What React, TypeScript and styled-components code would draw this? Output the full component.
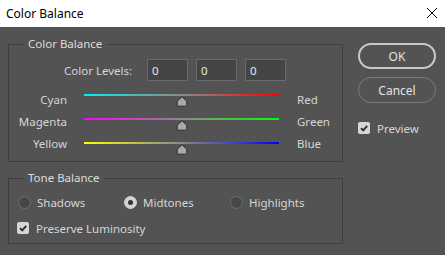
import React from "react";
import styled, { createGlobalStyle } from "styled-components";

const Global = createGlobalStyle`
  html, body { margin: 0; padding: 0; background: #535353; }
  * { box-sizing: border-box; }
`;

const Window = styled.div`
  width: 445px;
  height: 255px;
  background: #535353;
  display: flex;
  flex-direction: column;
  font-family: "Noto Sans", "Open Sans", sans-serif;
  font-size: 11.5px;
  color: #d6d6d6;
  overflow: hidden;
`;

const TitleBar = styled.div`
  height: 27px;
  flex: none;
  background: #ffffff;
  color: #000;
  display: flex;
  align-items: center;
  justify-content: space-between;
  padding: 0 7px 1px 6px;
  font-size: 12px;
`;

const Body = styled.div`
  display: flex;
  gap: 15px;
  padding: 9px 0 0 8px;
`;

const LeftCol = styled.div`
  width: 335px;
  display: flex;
  flex-direction: column;
  gap: 8px;
`;

const RightCol = styled.div`
  width: 78px;
  display: flex;
  flex-direction: column;
  padding-top: 7px;
`;

const Group = styled.fieldset<{ $pb: number }>`
  margin: 0;
  min-width: 0;
  border: 1px solid #3e3e3e;
  padding: 0 0 ${(p) => p.$pb}px 0;
  display: flex;
  flex-direction: column;
`;

const Legend = styled.legend`
  padding: 0 4px;
  margin-left: 15px;
  line-height: 16px;
  height: 16px;
  font-size: 11.5px;
  color: #dcdcdc;
`;

const LevelsRow = styled.div`
  display: flex;
  align-items: center;
  margin-top: 7px;
  margin-bottom: 7px;
  padding-left: 55px;
  height: 22px;
`;

const LevelsLabel = styled.span`
  width: 83px;
`;

const LevelInput = styled.div`
  width: 41px;
  height: 22px;
  background: #454545;
  border: 1px solid #6a6a6a;
  color: #e6e6e6;
  display: flex;
  align-items: center;
  padding-left: 4px;
  margin-right: 8px;
`;

const SliderRow = styled.div`
  display: grid;
  grid-template-columns: 58px 195px auto;
  column-gap: 17px;
  align-items: center;
  height: 24px;
`;

const LeftLabel = styled.span<{ $dy: number }>`
  text-align: right;
  line-height: 16px;
  transform: translateY(${(p) => p.$dy}px);
`;

const RightLabel = styled.span<{ $dy: number }>`
  margin-left: 1px;
  line-height: 16px;
  transform: translateY(${(p) => p.$dy}px);
`;

const Slider = styled.div`
  height: 14px;
  display: flex;
  flex-direction: column;
  align-items: center;
`;

const Track = styled.div<{ $from: string; $to: string }>`
  width: 100%;
  height: 2px;
  margin-top: 1px;
  background: linear-gradient(
    to right,
    ${(p) => p.$from},
    #8a8a8a 50%,
    ${(p) => p.$to}
  );
`;

const Thumb = () => (
  <svg width="12" height="11" viewBox="0 0 12 11" style={{ display: "block" }}>
    <path
      d="M6 0.8 L10.8 5.2 L10.8 9.2 Q10.8 10.2 9.8 10.2 L2.2 10.2 Q1.2 10.2 1.2 9.2 L1.2 5.2 Z"
      fill="#a9a9a9"
      stroke="#2a2a2a"
      strokeWidth="1"
      strokeLinejoin="round"
    />
  </svg>
);

const RadioRow = styled.div`
  display: flex;
  margin-top: 6px;
  padding-left: 9px;
  height: 20px;
`;

const RadioItem = styled.label`
  width: 106px;
  display: flex;
  align-items: center;
  gap: 6px;
`;

const Radio = styled.span<{ $on?: boolean }>`
  width: 13px;
  height: 13px;
  border-radius: 50%;
  flex: none;
  background: ${(p) => (p.$on ? "#d2d2d2" : "#474747")};
  border: 1px solid ${(p) => (p.$on ? "#d2d2d2" : "#6e6e6e")};
  display: flex;
  align-items: center;
  justify-content: center;
  &::after {
    content: "";
    width: 5px;
    height: 5px;
    border-radius: 50%;
    background: ${(p) => (p.$on ? "#333" : "transparent")};
  }
`;

const CheckRow = styled.label<{ $pl: number; $mt: number }>`
  display: flex;
  align-items: center;
  gap: 7px;
  height: 16px;
  padding-left: ${(p) => p.$pl}px;
  margin-top: ${(p) => p.$mt}px;
`;

const Box = styled.span`
  width: 12px;
  height: 12px;
  border-radius: 2px;
  background: #d6d6d6;
  flex: none;
  display: flex;
  align-items: center;
  justify-content: center;
`;

const Check = () => (
  <svg width="10" height="10" viewBox="0 0 10 10">
    <path d="M2 5.2 L4.2 7.4 L8.2 2.8" fill="none" stroke="#2a2a2a" strokeWidth="1.8" />
  </svg>
);

const Button = styled.div<{ $primary?: boolean }>`
  width: 78px;
  height: 26px;
  border-radius: 13px;
  border: ${(p) => (p.$primary ? "2px solid #c9c9c9" : "1px solid #7a7a7a")};
  display: flex;
  align-items: center;
  justify-content: center;
  color: #e2e2e2;
  font-size: 12px;
  margin-bottom: 8px;
`;

const CloseIcon = () => (
  <svg width="12" height="12" viewBox="0 0 12 12">
    <path d="M1 1 L11 11 M11 1 L1 11" stroke="#000" strokeWidth="1" />
  </svg>
);

const sliders = [
  { l: "Cyan", r: "Red", from: "#00f0f0", to: "#ff0000", dy: 0 },
  { l: "Magenta", r: "Green", from: "#ff00ff", to: "#00ff00", dy: -2 },
  { l: "Yellow", r: "Blue", from: "#ffff00", to: "#0000ff", dy: -4 },
];

export default function App() {
  return (
    <>
      <Global />
      <Window>
        <TitleBar>
          <span>Color Balance</span>
          <CloseIcon />
        </TitleBar>
        <Body>
          <LeftCol>
            <Group $pb={1}>
              <Legend>Color Balance</Legend>
              <LevelsRow>
                <LevelsLabel>Color Levels:</LevelsLabel>
                <LevelInput>0</LevelInput>
                <LevelInput>0</LevelInput>
                <LevelInput>0</LevelInput>
              </LevelsRow>
              {sliders.map((s) => (
                <SliderRow key={s.l}>
                  <LeftLabel $dy={s.dy}>{s.l}</LeftLabel>
                  <Slider>
                    <Track $from={s.from} $to={s.to} />
                    <Thumb />
                  </Slider>
                  <RightLabel $dy={s.dy}>{s.r}</RightLabel>
                </SliderRow>
              ))}
            </Group>
            <Group $pb={7}>
              <Legend>Tone Balance</Legend>
              <RadioRow>
                <RadioItem>
                  <Radio />
                  Shadows
                </RadioItem>
                <RadioItem>
                  <Radio $on />
                  Midtones
                </RadioItem>
                <RadioItem>
                  <Radio />
                  Highlights
                </RadioItem>
              </RadioRow>
              <CheckRow $pl={8} $mt={8}>
                <Box>
                  <Check />
                </Box>
                Preserve Luminosity
              </CheckRow>
            </Group>
          </LeftCol>
          <RightCol>
            <Button $primary>OK</Button>
            <Button>Cancel</Button>
            <CheckRow $pl={0} $mt={9}>
              <Box>
                <Check />
              </Box>
              Preview
            </CheckRow>
          </RightCol>
        </Body>
      </Window>
    </>
  );
}
